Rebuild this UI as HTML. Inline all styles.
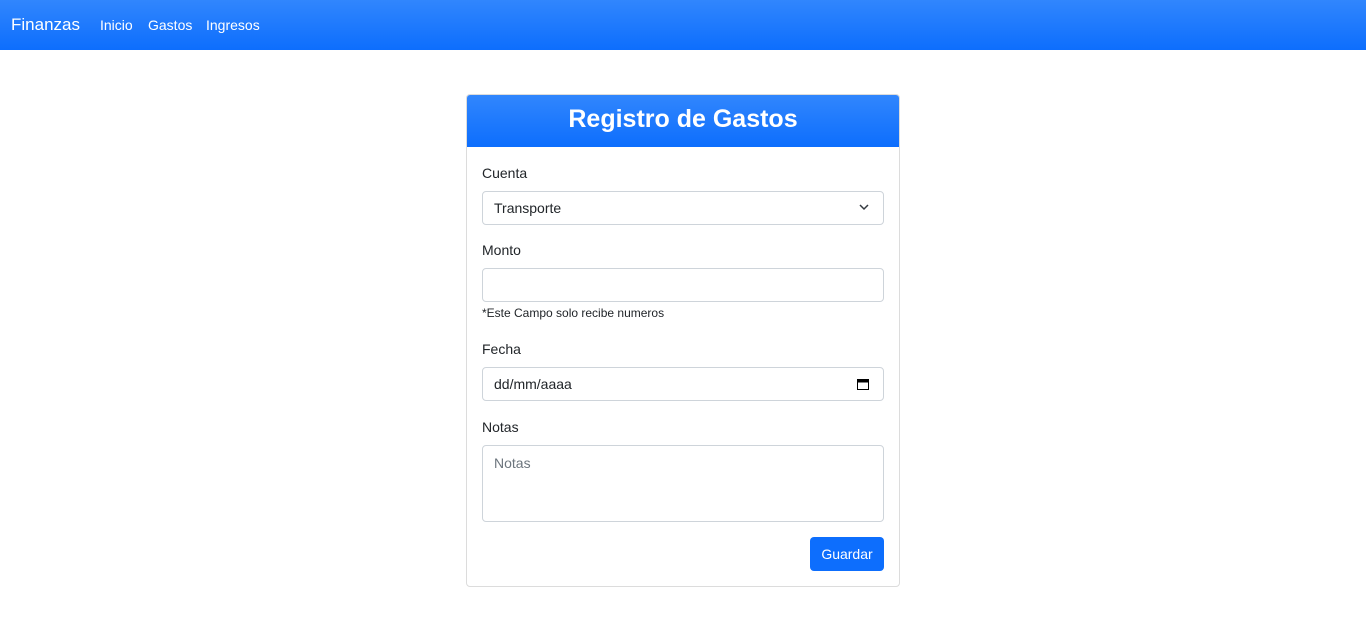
<!DOCTYPE html>
<html><head><meta charset="utf-8"><style>
*{box-sizing:border-box;margin:0;padding:0}
body{width:1366px;height:630px;background:#fff;font-family:"Liberation Sans",sans-serif;color:#212529;position:relative;overflow:hidden}
.nav{height:50px;background:linear-gradient(#3186fd,#0d6efd);position:relative;color:#fff}
.nav span{position:absolute;top:0;line-height:50px}
.card{position:absolute;left:466px;top:94px;width:434px;height:493px;border:1px solid #dcdcdc;border-radius:4px;overflow:hidden}
.hd{height:52px;background:linear-gradient(#3186fd,#0d6efd);color:#fff;font-weight:bold;font-size:25px;text-align:center;line-height:49px}
.a{position:absolute;left:15px;font-size:14px}
.in{position:absolute;left:15px;width:402px;height:34px;border:1px solid #ced4da;border-radius:4px;font-size:14px;padding-left:11px;line-height:32px}
.btn{position:absolute;left:343px;top:442px;width:74px;height:34px;background:#0d6efd;color:#fff;border-radius:4px;font-size:14px;text-align:center;line-height:34px}
</style></head><body>
<div class="nav"><span style="left:11px;font-size:17px">Finanzas</span><span style="left:100px;font-size:14px">Inicio</span><span style="left:148px;font-size:14px">Gastos</span><span style="left:206px;font-size:14px">Ingresos</span></div>
<div class="card">
<div class="hd">Registro de Gastos</div>
<div class="a" style="top:70px">Cuenta</div>
<div class="in" style="top:96px">Transporte<svg style="position:absolute;right:14px;top:12px" width="10" height="7" viewBox="0 0 10 7"><path d="M1 1l4 4 4-4" stroke="#343a40" stroke-width="1.5" fill="none"/></svg></div>
<div class="a" style="top:147px">Monto</div>
<div class="in" style="top:173px"></div>
<div class="a" style="top:211px;font-size:12px">*Este Campo solo recibe numeros</div>
<div class="a" style="top:246px">Fecha</div>
<div class="in" style="top:272px">dd/mm/aaaa<svg style="position:absolute;right:14px;top:10px" width="12" height="12" viewBox="0 0 12 12"><rect x="0.5" y="1.5" width="11" height="10" fill="none" stroke="#000"/><rect x="0.5" y="1.5" width="11" height="3" fill="#000"/></svg></div>
<div class="a" style="top:324px">Notas</div>
<div class="in" style="top:350px;height:77px;color:#6c757d;line-height:34px">Notas</div>
<div class="btn">Guardar</div>
</div>
</body></html>
